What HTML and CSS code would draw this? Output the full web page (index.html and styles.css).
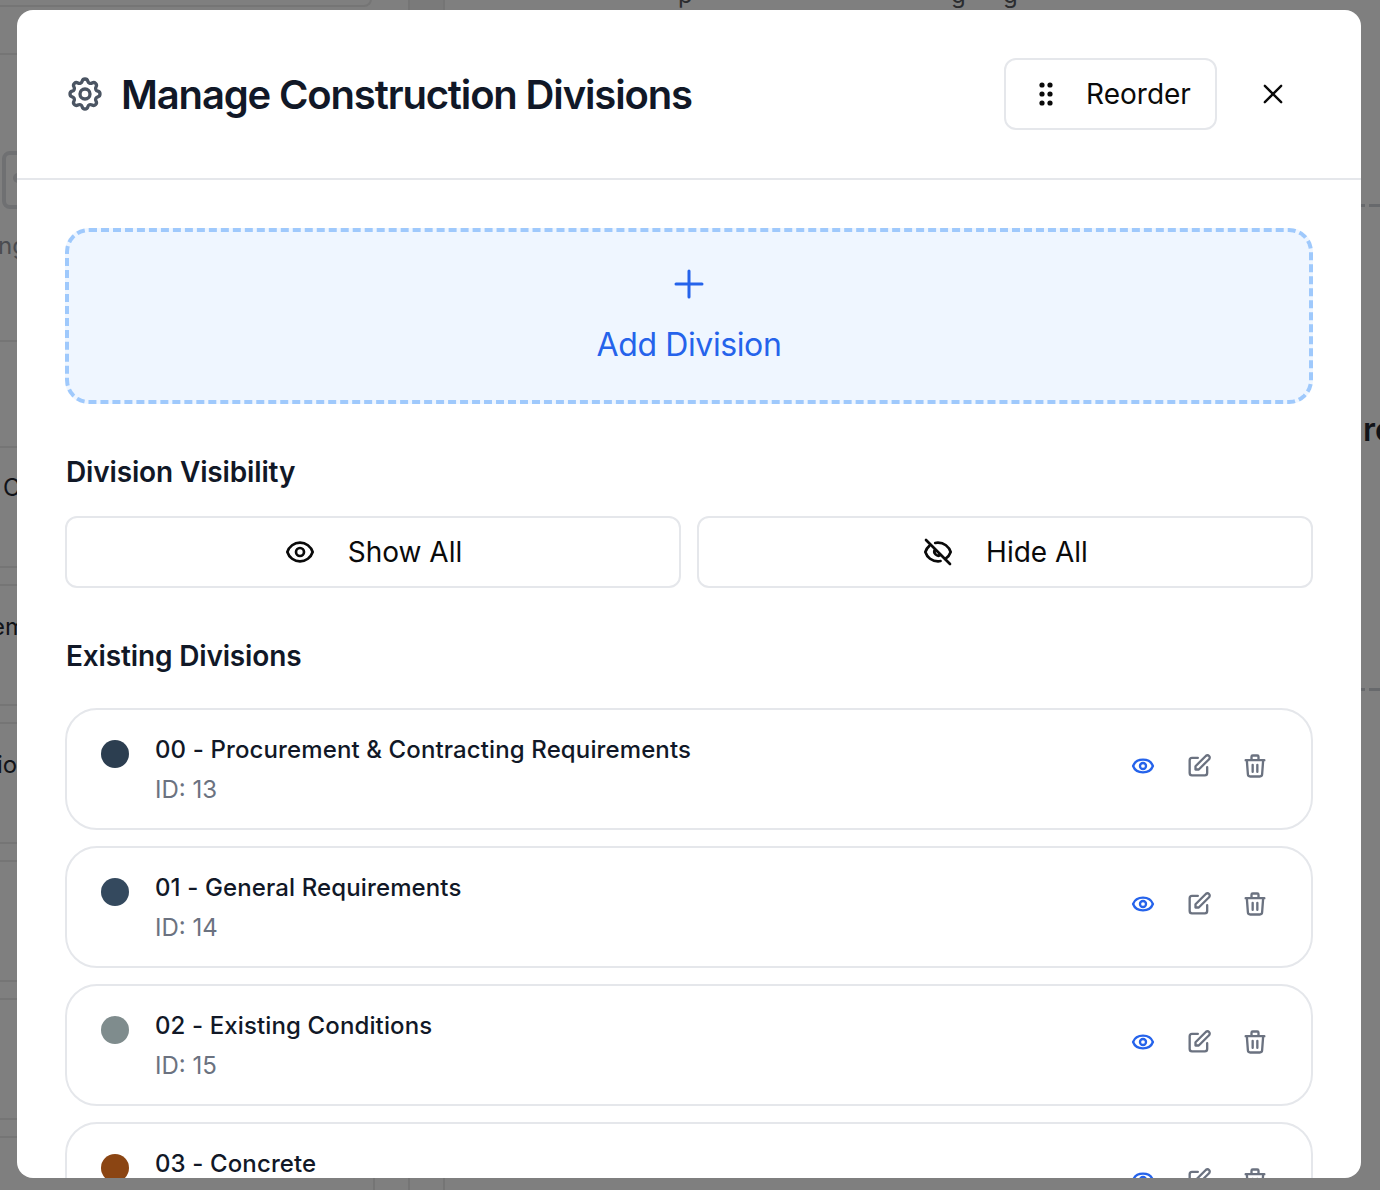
FILE: index.html
```html
<!DOCTYPE html>
<html lang="en">
<head>
    <meta charset="UTF-8">
    <meta name="viewport" content="width=device-width, initial-scale=1.0">
    <title>Manage Construction Divisions</title>
    <link rel="stylesheet" href="styles.css">
</head>
<body>
    <!-- page behind the overlay, only slivers show -->
    <div class="backdrop">
        <span class="bg-card"></span>
        <span class="bg-line" style="left:373px;top:1178px;width:2px;height:12px"></span>
        <span class="bg-band"></span>
        <span class="bg-line" style="left:408px;top:1178px;width:2px;height:12px"></span>
        <span class="bg-line" style="left:443px;top:1178px;width:2px;height:12px"></span>
        <span class="bg-line" style="left:0;top:53px;width:17px;height:2px"></span>
        <span class="bg-line" style="left:0;top:340px;width:17px;height:2px"></span>
        <span class="bg-line" style="left:0;top:446px;width:17px;height:2px"></span>
        <span class="bg-line" style="left:0;top:566px;width:17px;height:2px"></span>
        <span class="bg-line" style="left:0;top:584px;width:17px;height:2px"></span>
        <span class="bg-line" style="left:0;top:704px;width:17px;height:2px"></span>
        <span class="bg-line" style="left:0;top:722px;width:17px;height:2px"></span>
        <span class="bg-line" style="left:0;top:842px;width:17px;height:2px"></span>
        <span class="bg-line" style="left:0;top:860px;width:17px;height:2px"></span>
        <span class="bg-line" style="left:0;top:980px;width:17px;height:2px"></span>
        <span class="bg-line" style="left:0;top:998px;width:17px;height:2px"></span>
        <span class="bg-line" style="left:0;top:1118px;width:17px;height:2px"></span>
        <span class="bg-line" style="left:0;top:1136px;width:17px;height:2px"></span>
        <span class="bg-box"></span>
        <span class="bg-knob"></span>
        <span class="bg-text bg-sliver" style="left:678px;top:-19px">p</span>
        <span class="bg-text bg-sliver" style="left:951px;top:-19px">g</span>
        <span class="bg-text bg-sliver" style="left:1003px;top:-19px">g</span>
        <span class="bg-text bg-muted" style="left:-2px;top:232px">ng</span>
        <span class="bg-text" style="left:3px;top:474px">C</span>
        <span class="bg-text" style="left:-9px;top:613px">em</span>
        <span class="bg-text" style="left:-3px;top:751px">io</span>
        <span class="bg-text bg-big" style="left:1363px;top:411px">re</span>
        <span class="bg-dash" style="top:204px"></span>
        <span class="bg-dash" style="top:688px"></span>
    </div>

    <div class="overlay">
        <div class="modal">
            <header class="modal-header">
                <div class="modal-title">
                    <svg class="icon-gear" viewBox="0 0 24 24" fill="none" stroke="currentColor" stroke-width="2" stroke-linecap="round" stroke-linejoin="round">
                        <path d="M10.325 4.317c.426-1.756 2.924-1.756 3.35 0a1.724 1.724 0 002.573 1.066c1.543-.94 3.31.826 2.37 2.37a1.724 1.724 0 001.065 2.572c1.756.426 1.756 2.924 0 3.35a1.724 1.724 0 00-1.066 2.573c.94 1.543-.826 3.31-2.37 2.37a1.724 1.724 0 00-2.572 1.065c-.426 1.756-2.924 1.756-3.35 0a1.724 1.724 0 00-2.573-1.066c-1.543.94-3.31-.826-2.37-2.37a1.724 1.724 0 00-1.065-2.572c-1.756-.426-1.756-2.924 0-3.35a1.724 1.724 0 001.066-2.573c-.94-1.543.826-3.31 2.37-2.37.996.608 2.296.07 2.572-1.065z"/>
                        <circle cx="12" cy="12" r="3"/>
                    </svg>
                    <h1>Manage Construction Divisions</h1>
                </div>
                <div class="header-actions">
                    <button class="btn btn-reorder">
                        <svg class="icon-grip" viewBox="0 0 16 24" fill="currentColor">
                            <circle cx="4" cy="3" r="2.6"/><circle cx="12" cy="3" r="2.6"/>
                            <circle cx="4" cy="12" r="2.6"/><circle cx="12" cy="12" r="2.6"/>
                            <circle cx="4" cy="21" r="2.6"/><circle cx="12" cy="21" r="2.6"/>
                        </svg>
                        Reorder
                    </button>
                    <button class="btn-close">
                        <svg viewBox="0 0 24 24" fill="none" stroke="currentColor" stroke-width="2" stroke-linecap="round">
                            <path d="M5 5l14 14M19 5L5 19"/>
                        </svg>
                    </button>
                </div>
            </header>

            <div class="modal-body">
                <button class="add-division">
                    <svg class="icon-plus" viewBox="0 0 32 32" fill="none" stroke="currentColor" stroke-width="3" stroke-linecap="round">
                        <path d="M16 3v26M3 16h26"/>
                    </svg>
                    <span>Add Division</span>
                </button>

                <h2>Division Visibility</h2>
                <div class="visibility-btns">
                    <button class="btn btn-wide">
                        <svg class="icon-md" viewBox="0 0 24 24" fill="none" stroke="currentColor" stroke-width="2" stroke-linecap="round" stroke-linejoin="round">
                            <path d="M2.5 12C3.8 7.9 7.6 5 12 5s8.2 2.9 9.5 7c-1.3 4.1-5.1 7-9.5 7s-8.2-2.9-9.5-7z"/>
                            <circle cx="12" cy="12" r="3"/>
                        </svg>
                        Show All
                    </button>
                    <button class="btn btn-wide">
                        <svg class="icon-md" viewBox="0 0 24 24" fill="none" stroke="currentColor" stroke-width="2" stroke-linecap="round" stroke-linejoin="round">
                            <path d="M13.9 18.8A10 10 0 0 1 12 19c-4.5 0-8.2-2.9-9.5-7a9.9 9.9 0 0 1 3-4.6M9.9 5.2A10 10 0 0 1 12 5c4.4 0 8.2 2.900 9.500 7a10 10 0 0 1-4 5.200"/>
                            <path d="M9.9 9.9a3 3 0 0 0 4.2 4.2M14.1 14.1 9.9 9.9M3 3l18 18"/>
                        </svg>
                        Hide All
                    </button>
                </div>

                <h2 class="existing-title">Existing Divisions</h2>
                <div class="division-list">
                    <div class="division-row">
                        <span class="dot dot-navy"></span>
                        <div class="division-info">
                            <div class="division-name">00 - Procurement &amp; Contracting Requirements</div>
                            <div class="division-id">ID: 13</div>
                        </div>
                        <div class="row-actions">
                            <svg class="icon-action icon-blue" viewBox="0 0 24 24"><path d="M3.5 12C4.7 8.800 8 6.600 12 6.600s7.300 2.200 8.500 5.400c-1.200 3.200-4.500 5.400-8.500 5.400S4.700 15.200 3.500 12z"/><circle cx="12" cy="12" r="2.600"/></svg>
                            <svg class="icon-action" viewBox="0 0 24 24"><path d="M11 5H6a2 2 0 0 0-2 2v11a2 2 0 0 0 2 2h11a2 2 0 0 0 2-2v-5"/><path d="M17.6 3.6a2 2 0 1 1 2.8 2.8L11.8 15H9v-2.8z"/></svg>
                            <svg class="icon-action" viewBox="0 0 24 24"><path d="M19 7l-.9 12.1A2 2 0 0 1 16.1 21H7.900a2 2 0 0 1-2-1.900L5 7M10 11v6M14 11v6M15 7V4a1 1 0 0 0-1-1h-4a1 1 0 0 0-1 1v3M4 7h16"/></svg>
                        </div>
                    </div>
                    <div class="division-row">
                        <span class="dot dot-slate"></span>
                        <div class="division-info">
                            <div class="division-name">01 - General Requirements</div>
                            <div class="division-id">ID: 14</div>
                        </div>
                        <div class="row-actions">
                            <svg class="icon-action icon-blue" viewBox="0 0 24 24"><path d="M3.5 12C4.7 8.800 8 6.600 12 6.600s7.300 2.200 8.500 5.400c-1.200 3.200-4.500 5.400-8.500 5.400S4.700 15.200 3.500 12z"/><circle cx="12" cy="12" r="2.600"/></svg>
                            <svg class="icon-action" viewBox="0 0 24 24"><path d="M11 5H6a2 2 0 0 0-2 2v11a2 2 0 0 0 2 2h11a2 2 0 0 0 2-2v-5"/><path d="M17.6 3.6a2 2 0 1 1 2.8 2.8L11.8 15H9v-2.8z"/></svg>
                            <svg class="icon-action" viewBox="0 0 24 24"><path d="M19 7l-.9 12.1A2 2 0 0 1 16.1 21H7.900a2 2 0 0 1-2-1.900L5 7M10 11v6M14 11v6M15 7V4a1 1 0 0 0-1-1h-4a1 1 0 0 0-1 1v3M4 7h16"/></svg>
                        </div>
                    </div>
                    <div class="division-row">
                        <span class="dot dot-gray"></span>
                        <div class="division-info">
                            <div class="division-name">02 - Existing Conditions</div>
                            <div class="division-id">ID: 15</div>
                        </div>
                        <div class="row-actions">
                            <svg class="icon-action icon-blue" viewBox="0 0 24 24"><path d="M3.5 12C4.7 8.800 8 6.600 12 6.600s7.300 2.200 8.500 5.400c-1.200 3.200-4.500 5.400-8.500 5.400S4.700 15.200 3.500 12z"/><circle cx="12" cy="12" r="2.600"/></svg>
                            <svg class="icon-action" viewBox="0 0 24 24"><path d="M11 5H6a2 2 0 0 0-2 2v11a2 2 0 0 0 2 2h11a2 2 0 0 0 2-2v-5"/><path d="M17.6 3.6a2 2 0 1 1 2.8 2.8L11.8 15H9v-2.8z"/></svg>
                            <svg class="icon-action" viewBox="0 0 24 24"><path d="M19 7l-.9 12.1A2 2 0 0 1 16.1 21H7.900a2 2 0 0 1-2-1.900L5 7M10 11v6M14 11v6M15 7V4a1 1 0 0 0-1-1h-4a1 1 0 0 0-1 1v3M4 7h16"/></svg>
                        </div>
                    </div>
                    <div class="division-row">
                        <span class="dot dot-brown"></span>
                        <div class="division-info">
                            <div class="division-name">03 - Concrete</div>
                            <div class="division-id">ID: 16</div>
                        </div>
                        <div class="row-actions">
                            <svg class="icon-action icon-blue" viewBox="0 0 24 24"><path d="M3.5 12C4.7 8.800 8 6.600 12 6.600s7.300 2.200 8.500 5.400c-1.200 3.200-4.500 5.400-8.500 5.400S4.700 15.200 3.500 12z"/><circle cx="12" cy="12" r="2.600"/></svg>
                            <svg class="icon-action" viewBox="0 0 24 24"><path d="M11 5H6a2 2 0 0 0-2 2v11a2 2 0 0 0 2 2h11a2 2 0 0 0 2-2v-5"/><path d="M17.6 3.6a2 2 0 1 1 2.8 2.8L11.8 15H9v-2.8z"/></svg>
                            <svg class="icon-action" viewBox="0 0 24 24"><path d="M19 7l-.9 12.1A2 2 0 0 1 16.1 21H7.900a2 2 0 0 1-2-1.900L5 7M10 11v6M14 11v6M15 7V4a1 1 0 0 0-1-1h-4a1 1 0 0 0-1 1v3M4 7h16"/></svg>
                        </div>
                    </div>
                </div>
            </div>
        </div>
    </div>
</body>
</html>
```

FILE: styles.css
```css
* {
    box-sizing: border-box;
}

html, body {
    height: 100%;
}

body {
    margin: 0;
    font-family: Inter, "Noto Sans", sans-serif;
    background-color: #7f7f7f;
    color: #111827;
    overflow: hidden;
}

.backdrop {
    position: absolute;
    inset: 0;
    overflow: hidden;
}

.bg-line {
    position: absolute;
    background-color: #757575;
}

.bg-card {
    position: absolute;
    left: -20px;
    top: -20px;
    width: 392px;
    height: 27px;
    border: 2px solid #757575;
    border-radius: 8px;
}

.bg-band {
    position: absolute;
    left: 408px;
    top: 0;
    width: 37px;
    height: 10px;
    background-color: #7a7a7a;
    border-left: 2px solid #757575;
    border-right: 2px solid #757575;
}

.bg-box {
    position: absolute;
    left: 2px;
    top: 151px;
    width: 30px;
    height: 58px;
    border: 4px solid #6f7072;
    border-radius: 8px;
}

.bg-knob {
    position: absolute;
    left: 13px;
    top: 173px;
    width: 10px;
    height: 10px;
    border-radius: 50%;
    background-color: #6f7072;
}

.bg-text {
    position: absolute;
    font-size: 24px;
    line-height: 28px;
    color: #111318;
}

.bg-sliver {
    color: #2b2c2f;
}

.bg-muted {
    color: #4a4c50;
}

.bg-big {
    font-size: 32px;
    line-height: 38px;
    font-weight: 600;
}

.bg-dash {
    position: absolute;
    left: 1361px;
    width: 19px;
    height: 3px;
    background: repeating-linear-gradient(90deg, #67696c 0 8px, transparent 8px 12px) -4px 0;
}

.overlay {
    position: relative;
    height: 100%;
    padding: 10px 19px 12px 17px;
}

.modal {
    height: 100%;
    background: white;
    border-radius: 16px;
    overflow: hidden;
}

.modal-header {
    height: 170px;
    padding: 0 60px 0 48px;
    display: flex;
    align-items: center;
    justify-content: space-between;
    border-bottom: 2px solid #e5e7eb;
}

.modal-title {
    display: flex;
    align-items: center;
    gap: 16px;
}

.modal-title h1 {
    margin: 2px 0 0;
    font-size: 40px;
    line-height: 48px;
    font-weight: 600;
    letter-spacing: -1.15px;
    color: #111827;
}

.icon-gear {
    width: 40px;
    height: 40px;
    color: #4b5563;
}

.header-actions {
    display: flex;
    align-items: center;
    gap: 28px;
}

.btn {
    display: flex;
    align-items: center;
    justify-content: center;
    gap: 32px;
    height: 72px;
    padding: 0;
    background: white;
    border: 2px solid #e5e7eb;
    border-radius: 12px;
    font-family: inherit;
    font-size: 28px;
    font-weight: 400;
    color: #0a0a0a;
}

.btn-reorder {
    width: 213px;
    padding-left: 8px;
}

.icon-grip {
    width: 16px;
    height: 24px;
}

.btn-close {
    width: 56px;
    height: 56px;
    padding: 14px;
    background: none;
    border: none;
    color: #0a0a0a;
}

.btn-close svg {
    display: block;
    width: 28px;
    height: 28px;
}

.modal-body {
    padding: 48px;
}

.add-division {
    display: flex;
    flex-direction: column;
    align-items: center;
    justify-content: center;
    gap: 21px;
    width: 100%;
    height: 176px;
    padding: 5px 0 0;
    background-color: #eff6ff;
    border: 4px dashed #9fc9fc;
    border-radius: 24px;
    font-family: inherit;
    font-size: 32px;
    line-height: 48px;
    font-weight: 400;
    letter-spacing: -0.4px;
    color: #2563eb;
}

.icon-plus {
    width: 32px;
    height: 32px;
}

h2 {
    margin: 48px 0 24px;
    padding-left: 1px;
    font-size: 28px;
    line-height: 40px;
    font-weight: 600;
    letter-spacing: -0.15px;
    color: #111827;
}

.visibility-btns {
    display: grid;
    grid-template-columns: 1fr 1fr;
    gap: 16px;
}

.icon-md {
    width: 32px;
    height: 32px;
}

.existing-title {
    margin-top: 48px;
    margin-bottom: 32px;
}

.division-list {
    display: flex;
    flex-direction: column;
    gap: 16px;
}

.division-row {
    display: flex;
    align-items: center;
    height: 122px;
    padding: 0 42px 0 34px;
    background: white;
    border: 2px solid #e5e7eb;
    border-radius: 32px;
}

.dot {
    flex: none;
    align-self: flex-start;
    width: 28px;
    height: 28px;
    margin: 30px 26px 0 0;
    border-radius: 50%;
}

.dot-navy { background-color: #2c3e50; }
.dot-slate { background-color: #34495e; }
.dot-gray { background-color: #7f8c8d; }
.dot-brown { background-color: #8b4513; }

.division-info {
    flex: 1;
    padding-top: 1px;
}

.division-name {
    font-size: 24px;
    line-height: 32px;
    font-weight: 500;
    letter-spacing: 0.12px;
    color: #111827;
}

.division-id {
    margin-top: 8px;
    font-size: 24px;
    line-height: 32px;
    color: #6b7280;
}

.row-actions {
    display: flex;
    gap: 28px;
    margin-top: -6px;
}

.icon-action {
    width: 28px;
    height: 28px;
    fill: none;
    stroke: #6b7280;
    stroke-width: 2;
    stroke-linecap: round;
    stroke-linejoin: round;
}

.icon-blue {
    stroke: #2563eb;
}
```
